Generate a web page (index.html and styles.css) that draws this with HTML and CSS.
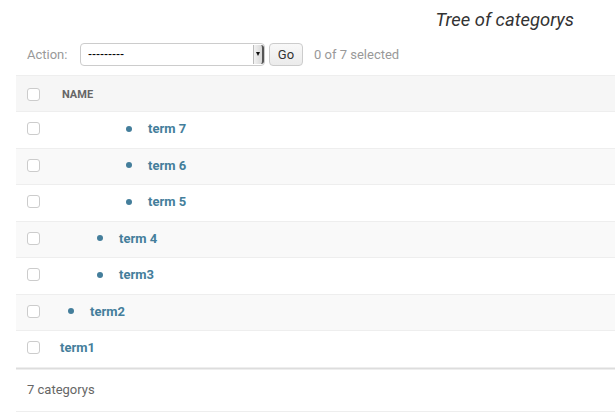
FILE: index.html
```html
<!DOCTYPE html>
<html>
<head>
<meta charset="utf-8">
<link rel="stylesheet" href="styles.css">
</head>
<body>
<div class="page">
  <h1 class="title">Tree of categorys</h1>
  <div class="actions">
    <span class="action-label">Action:</span>
    <div class="select">
      <span class="select-value">---------</span>
      <span class="select-arrow"><span class="tri"></span></span>
    </div>
    <button class="go">Go</button>
    <span class="counter">0 of 7 selected</span>
  </div>
  <div class="table">
    <div class="row head">
      <span class="cb"></span>
      <span class="col-name">NAME</span>
    </div>
    <div class="row">
      <span class="cb"></span>
      <span class="cell lvl3"><span class="dot"></span><a>term 7</a></span>
    </div>
    <div class="row alt">
      <span class="cb"></span>
      <span class="cell lvl3"><span class="dot"></span><a>term 6</a></span>
    </div>
    <div class="row">
      <span class="cb"></span>
      <span class="cell lvl3"><span class="dot"></span><a>term 5</a></span>
    </div>
    <div class="row alt">
      <span class="cb"></span>
      <span class="cell lvl2"><span class="dot"></span><a>term 4</a></span>
    </div>
    <div class="row">
      <span class="cb"></span>
      <span class="cell lvl2"><span class="dot"></span><a>term3</a></span>
    </div>
    <div class="row alt">
      <span class="cb"></span>
      <span class="cell lvl1"><span class="dot"></span><a>term2</a></span>
    </div>
    <div class="row">
      <span class="cb"></span>
      <span class="cell lvl0"><a>term1</a></span>
    </div>
  </div>
  <div class="paginator">7 categorys</div>
</div>
</body>
</html>
```
FILE: styles.css
```css
html, body {
  margin: 0;
  padding: 0;
  background: #fff;
}
body {
  font-family: Roboto, "Liberation Sans", sans-serif;
  font-size: 13px;
  color: #333;
}
.page {
  padding-left: 16px;
  width: 640px;
}
.title {
  margin: 0;
  padding: 8px 41px 0 0;
  width: 599px;
  box-sizing: border-box;
  text-align: right;
  font-size: 18.4px;
  font-weight: 400;
  font-style: italic;
  line-height: 24px;
  height: 33px;
  color: #333;
}
.actions {
  display: flex;
  align-items: center;
  height: 42px;
  padding-left: 11px;
}
.action-label {
  color: #999;
  width: 53px;
}
.select {
  box-sizing: border-box;
  width: 185px;
  height: 23px;
  border: 1px solid #ccc;
  border-radius: 4px;
  display: flex;
  align-items: center;
  justify-content: space-between;
  background: #fff;
  padding-left: 7px;
  font-family: "Liberation Sans", Arial, sans-serif;
  font-size: 12px;
  color: #000;
}
.select-arrow {
  width: 8px;
  height: 19px;
  background: linear-gradient(to right, #f2f2f2, #d8d8d8);
  border-left: 1px solid #bbb;
  border-right: 2px solid #555;
  border-radius: 0 3px 3px 0;
  display: flex;
  align-items: center;
  justify-content: center;
}
.tri {
  width: 0;
  height: 0;
  border-left: 2.5px solid transparent;
  border-right: 2.5px solid transparent;
  border-top: 4px solid #111;
}
.go {
  margin-left: 4px;
  box-sizing: border-box;
  width: 34px;
  height: 23px;
  border: 1px solid #ccc;
  border-radius: 4px;
  background: linear-gradient(#f8f8f8, #ebebeb);
  font-family: Roboto, "Liberation Sans", sans-serif;
  font-size: 13px;
  color: #333;
  padding: 0;
}
.counter {
  margin-left: 11px;
  color: #999;
}
.table {
  border-top: 1px solid #eee;
}
.row {
  display: flex;
  align-items: center;
  height: 36.5px;
  box-sizing: border-box;
  border-bottom: 1px solid #eee;
  background: #fff;
  padding-bottom: 2px;
}
.row.alt {
  background: #f9f9f9;
}
.row.head {
  height: 36px;
  background: #f6f6f6;
  padding-bottom: 0;
  padding-top: 2px;
}
.cb {
  box-sizing: border-box;
  width: 13px;
  height: 13px;
  border: 1px solid #ccc;
  border-radius: 3px;
  background: #fff;
  margin-left: 11px;
  flex: none;
}
.col-name {
  margin-left: 22px;
  font-size: 11px;
  font-weight: 700;
  color: #666;
  text-transform: uppercase;
}
.cell {
  display: flex;
  align-items: center;
}
.cell a {
  color: #447e9b;
  font-weight: 700;
  font-size: 13px;
}
.dot {
  width: 6px;
  height: 6px;
  border-radius: 50%;
  background: #447e9b;
  margin-right: 16px;
}
.lvl0 { margin-left: 20px; }
.lvl1 { margin-left: 28px; }
.lvl2 { margin-left: 57px; }
.lvl3 { margin-left: 86px; }
.paginator {
  border-top: 1px solid #ddd;
  box-shadow: inset 0 1px 0 #eee;
  border-bottom: 1px solid #eee;
  height: 44px;
  box-sizing: border-box;
  padding-left: 11px;
  display: flex;
  align-items: center;
  color: #666;
}
```
